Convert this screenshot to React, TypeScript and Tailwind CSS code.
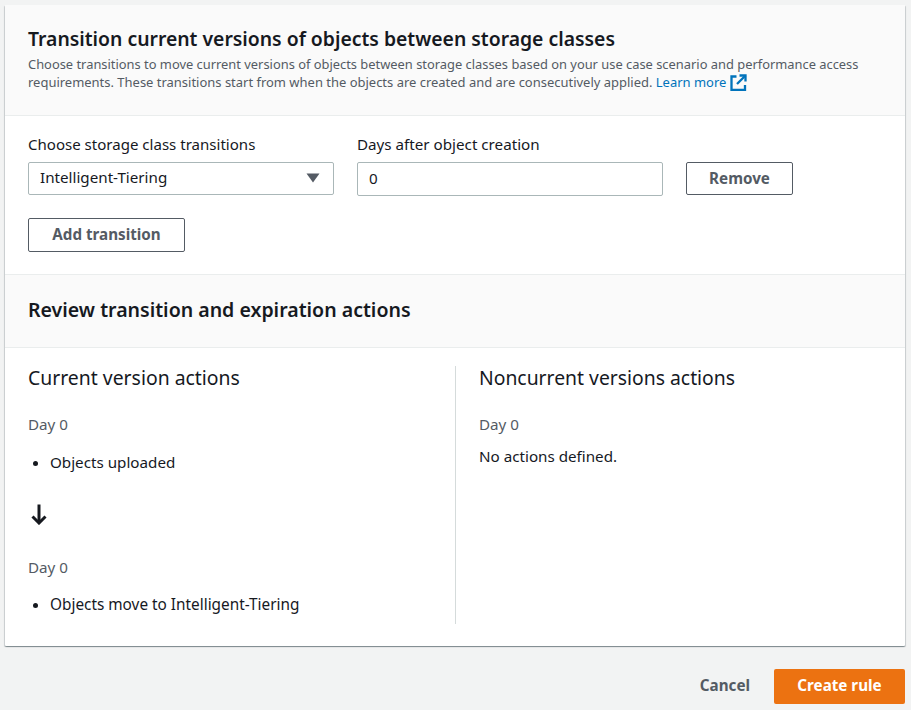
import React from 'react';

const font = { fontFamily: '"Noto Sans", sans-serif' };

const App: React.FC = () => {
  return (
    <div className="h-[710px] w-[911px] overflow-hidden bg-[#f2f3f3] pt-[5px] pr-[6px] pl-[5px] text-[15.2px] leading-[20px] text-[#16191f]" style={font}>
      <div className="h-[641px] rounded-[1px] bg-white shadow-[0_1px_1px_0_rgba(0,28,36,0.3),1px_1px_1px_0_rgba(0,28,36,0.15),-1px_1px_1px_0_rgba(0,28,36,0.15)]">
        {/* Header */}
        <div className="h-[111px] border-b border-[#eaeded] bg-[#fafafa] px-[23px] pt-[21px]">
          <h2 className="text-[19.38px] leading-[26px] font-semibold">Transition current versions of objects between storage classes</h2>
          <p className="mt-[3px] text-[12.98px] leading-[18px] whitespace-nowrap text-[#545b64]">
            <span className="text-[12.89px]">Choose transitions to move current versions of objects between storage classes based on your use case scenario and performance access</span>
            <br />
            requirements. These transitions start from when the objects are created and are consecutively applied.{' '}
            <span className="text-[#0073bb]">Learn more</span>
            <svg className="ml-[4px] inline-block align-[-4px]" width="17" height="17" viewBox="0 0 17 17" fill="none" stroke="#0073bb" strokeWidth="2.300">
              <path d="M6.500 2.500H1.500v13.500h13.500v-5" />
              <path d="M9.500 1.500h6v6" />
              <path d="M15.500 1.500L7 10" />
            </svg>
          </p>
        </div>

        {/* Transition form */}
        <div className="h-[159px] border-b border-[#eaeded] px-[23px] pt-[18px]">
          <div className="flex">
            <div className="w-[306px]">
              <label className="block text-[15.06px] leading-[20px]">Choose storage class transitions</label>
              <div className="mt-[8px] flex h-[33px] items-center justify-between rounded-[2px] border border-[#aab7b8] pr-[13px] pl-[11px]">
                <span className="-mt-[4px]">Intelligent-Tiering</span>
                <svg className="-mt-[1px]" width="14" height="10" viewBox="0 0 14 10" fill="#545b64">
                  <path d="M0.500 0.500h13L7 9.500z" />
                </svg>
              </div>
            </div>
            <div className="ml-[23px] w-[306px]">
              <label className="block leading-[20px]">Days after object creation</label>
              <div className="mt-[8px] flex h-[34px] items-center rounded-[2px] border border-[#aab7b8] pb-[2px] pl-[11px]">0</div>
            </div>
            <button className="mt-[28px] ml-[23px] h-[33px] w-[107px] rounded-[2px] border border-[#545b64] pb-[2px] font-bold text-[#545b64]">Remove</button>
          </div>
          <button className="mt-[22px] h-[34px] w-[157px] rounded-[2px] border border-[#545b64] pb-[2px] font-bold text-[#545b64]">Add transition</button>
        </div>

        {/* Review */}
        <div className="flex h-[73px] items-center border-b border-[#eaeded] bg-[#fafafa] px-[23px] pb-[2px]">
          <h2 className="text-[19.55px] leading-[26px] font-semibold">Review transition and expiration actions</h2>
        </div>

        <div className="flex px-[23px] pt-[18px]">
          <div className="h-[258px] w-[428px] border-r border-[#d5dbdb]">
            <h3 className="-mt-[1px] text-[19.4px] leading-[26px]">Current version actions</h3>
            <p className="mt-[23px] text-[#545b64]">Day 0</p>
            <ul className="mt-[18px] list-disc pl-[22px]">
              <li>Objects uploaded</li>
            </ul>
            <svg className="mt-[32px] ml-[3px] block" width="16" height="21" viewBox="0 0 16 21" fill="none" stroke="#16191f" strokeWidth="3">
              <path d="M8 0.500V19" />
              <path d="M1.500 12.500L8 19l6.500-6.500" />
            </svg>
            <p className="mt-[32px] text-[#545b64]">Day 0</p>
            <ul className="mt-[17px] list-disc pl-[22px]">
              <li className="text-[15.35px]">Objects move to Intelligent-Tiering</li>
            </ul>
          </div>
          <div className="pl-[23px]">
            <h3 className="-mt-[1px] text-[19.35px] leading-[26px]">Noncurrent versions actions</h3>
            <p className="mt-[23px] text-[#545b64]">Day 0</p>
            <p className="mt-[12px]">No actions defined.</p>
          </div>
        </div>
      </div>

      {/* Footer */}
      <div className="flex justify-end pt-[23px]">
        <button className="mr-[24px] pb-[4px] font-bold text-[#545b64]">Cancel</button>
        <button className="h-[35px] w-[131px] rounded-[2px] bg-[#ec7211] pb-[4px] font-bold text-white">Create rule</button>
      </div>
    </div>
  );
};

export default App;
